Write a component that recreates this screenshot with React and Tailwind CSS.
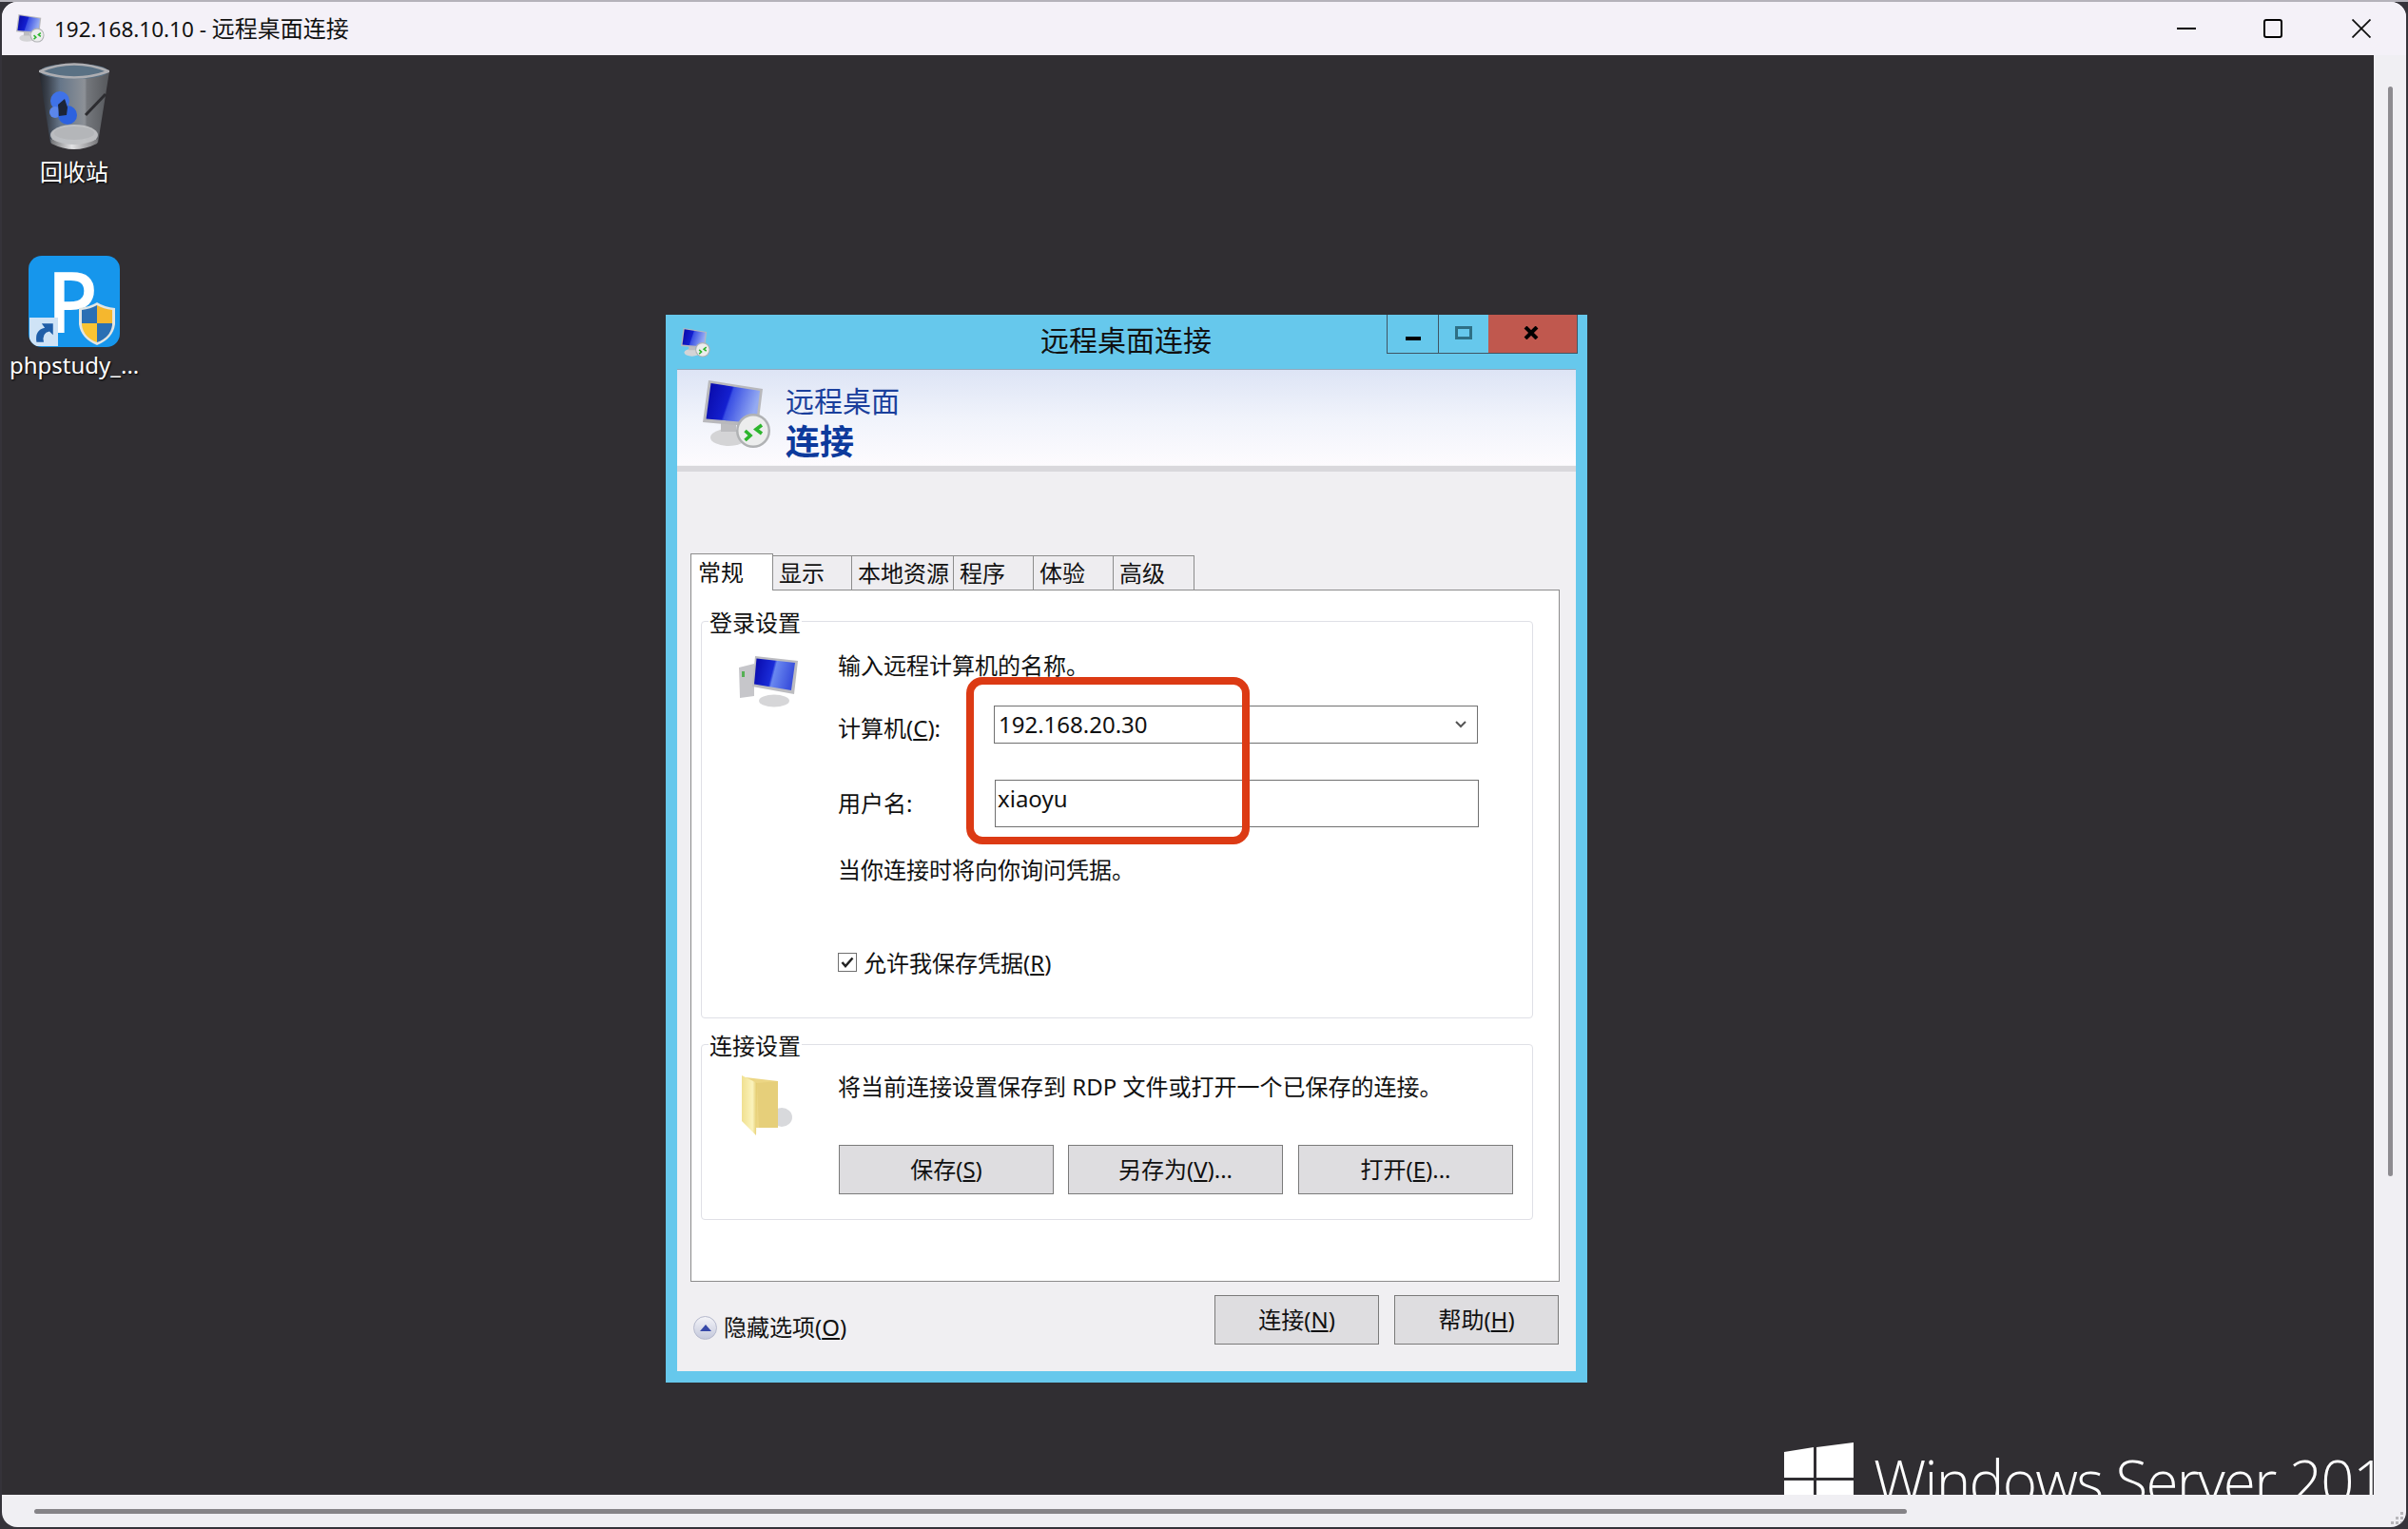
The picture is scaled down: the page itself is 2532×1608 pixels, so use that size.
import React from "react";

const font = "font-['Noto_Sans','Noto_Sans_CJK_SC',sans-serif]";

function RdpIcon({ id, className }) {
  return (
    <svg viewBox="0 0 72 72" className={className}>
      <defs>
        <linearGradient id={`${id}-screen`} x1="0" y1="0" x2="1" y2="0.25">
          <stop offset="0" stopColor="#0707a4" />
          <stop offset="0.48" stopColor="#1420d0" />
          <stop offset="0.52" stopColor="#3a50e4" />
          <stop offset="1" stopColor="#94aaf2" />
        </linearGradient>
      </defs>
      <ellipse cx="27" cy="60" rx="19" ry="9" fill="#d4d4d6" />
      <rect x="19" y="44" width="16" height="10" fill="#bdbdc0" />
      <polygon points="6,0 63,9 58,49 0,44" fill="#b8b8bc" />
      <polygon points="8.500,3 60,11 56,45 3.500,40.500" fill={`url(#${id}-screen)`} />
      <circle cx="53" cy="53" r="18" fill="#b0b2b4" />
      <circle cx="53" cy="53" r="15.500" fill="#eceded" />
      <path d="M44.500 53 L50 58 L44.500 63" fill="none" stroke="#2cb52c" strokeWidth="3.600" />
      <path d="M62 47 L56 51.500 L62 56" fill="none" stroke="#2cb52c" strokeWidth="3.600" />
    </svg>
  );
}

function RecycleBin() {
  return (
    <svg viewBox="0 0 74 94" className="w-[74px] h-[94px]">
      <defs>
        <linearGradient id="bin-body" x1="0" y1="0" x2="1" y2="0">
          <stop offset="0" stopColor="#23262c" />
          <stop offset="0.12" stopColor="#3a414c" />
          <stop offset="0.3" stopColor="#667689" />
          <stop offset="0.65" stopColor="#8d9197" />
          <stop offset="0.68" stopColor="#74777c" />
          <stop offset="1" stopColor="#55575b" />
        </linearGradient>
        <linearGradient id="bin-base" x1="0" y1="0" x2="1" y2="0">
          <stop offset="0" stopColor="#6f7073" />
          <stop offset="0.45" stopColor="#e2e2e4" />
          <stop offset="1" stopColor="#77777a" />
        </linearGradient>
      </defs>
      <path d="M0 9 L12 84 Q37 96 62 84 L74 9Z" fill="url(#bin-body)" />
      <ellipse cx="37" cy="9" rx="36" ry="8" fill="#5a7184" />
      <path d="M1 9 Q37 -6 73 9 Q37 22 1 9Z" fill="none" stroke="#aeaeb2" strokeWidth="2.500" />
      <path d="M70 33 L49 55" stroke="#2c2c30" strokeWidth="3" />
      <circle cx="22" cy="40" r="10" fill="#3f72e8" />
      <circle cx="17" cy="52" r="6" fill="#5b86ea" />
      <circle cx="30" cy="55" r="10" fill="#2c62e0" />
      <path d="M20 44 L27 38 L30 47 L29 55 L21 56Z" fill="#1c2438" />
      <ellipse cx="37" cy="76" rx="25" ry="11" fill="#c6c8ca" opacity="0.9" />
      <ellipse cx="37" cy="74" rx="21" ry="7" fill="#b4b6b9" />
      <path d="M12 80 Q37 92 62 80 L61 85 Q37 97 13 85Z" fill="url(#bin-base)" />
    </svg>
  );
}

function PhpStudyIcon() {
  return (
    <div className="relative w-[96px] h-[96px] rounded-[14px] bg-[#1696ec] overflow-hidden">
      <svg viewBox="0 0 96 96" className="absolute inset-0 w-full h-full">
        <text x="19" y="81" fontSize="88" fontWeight="600" fill="#fff" fontFamily="Open Sans, sans-serif">P</text>
        <path d="M72 49 Q64 54 53 55 L53 72 Q55 87 72 94 Q89 87 91 72 L91 55 Q80 54 72 49Z" fill="#e2e6e4" />
        <path d="M72 52 Q65 56 56 57 L56 71 L72 71Z" fill="#2a6fb4" />
        <path d="M72 52 Q79 56 88 57 L88 71 L72 71Z" fill="#f5b72e" />
        <path d="M56 71 L72 71 L72 91 Q58 86 56 73Z" fill="#f9c433" />
        <path d="M88 71 L72 71 L72 91 Q86 86 88 73Z" fill="#2a6fb4" />
      </svg>
      <div className="absolute left-[1px] bottom-[1px] w-[30px] h-[30px] bg-[#cfe3f6] flex items-center justify-center">
        <svg viewBox="0 0 24 24" className="w-[26px] h-[26px]">
          <path d="M5 22 Q3 10 13 8 L10 4 L21 4 L21 15 L17.500 11.500 Q10 13 12 22Z" fill="#1f5ea8" />
        </svg>
      </div>
    </div>
  );
}

function ComputerIcon() {
  return (
    <svg viewBox="0 0 64 56" className="w-[64px] h-[56px]">
      <defs>
        <linearGradient id="pc-screen" x1="0" y1="0" x2="1" y2="0.2">
          <stop offset="0" stopColor="#0707a8" />
          <stop offset="0.5" stopColor="#1a2cd8" />
          <stop offset="0.56" stopColor="#6a88f0" />
          <stop offset="1" stopColor="#3a50dc" />
        </linearGradient>
      </defs>
      <polygon points="0,14 16,10 16,44 1,46" fill="#c6c6ca" />
      <rect x="3" y="18" width="3" height="6" fill="#55b055" />
      <ellipse cx="37" cy="49" rx="16" ry="6.500" fill="#d6d6d8" />
      <polygon points="17,2 62,7 58,42 14,34" fill="#bcbcc0" />
      <polygon points="18.500,4.500 59,9 55,38 16,31.500" fill="url(#pc-screen)" />
    </svg>
  );
}

function FolderIcon() {
  return (
    <svg viewBox="0 0 54 64" className="w-[54px] h-[64px]">
      <defs>
        <linearGradient id="folder-flap" x1="0" y1="0" x2="1" y2="0">
          <stop offset="0" stopColor="#f0e090" />
          <stop offset="0.7" stopColor="#fbf3bc" />
          <stop offset="1" stopColor="#e2c96a" />
        </linearGradient>
      </defs>
      <ellipse cx="42" cy="44" rx="11" ry="10" fill="#d8d9dc" />
      <polygon points="4,2 38,6 38,55 14,55 4,50" fill="#ecd684" />
      <polygon points="16,8 38,6 38,55 18,55" fill="#e6cf7a" />
      <polygon points="0,0 16,8 15,63 0,48" fill="url(#folder-flap)" />
    </svg>
  );
}

function DesktopLabel({ children }) {
  return (
    <span className="text-[24px] leading-[30px] text-white whitespace-nowrap [text-shadow:1px_1px_2px_#000]">
      {children}
    </span>
  );
}

function Tab({ label, width, active }) {
  if (active) {
    return (
      <div
        className={`relative z-10 h-[39px] -mb-px ${width} bg-white border border-b-0 border-[#8c8c8c] pl-[7px] flex items-center text-[24px] leading-[30px]`}
      >
        {label}
      </div>
    );
  }
  return (
    <div
      className={`h-[36px] ${width} bg-[#eeedf0] border-t border-r border-[#8c8c8c] pl-[6px] flex items-center text-[24px] leading-[30px]`}
    >
      {label}
    </div>
  );
}

function GroupLabel({ children }) {
  return (
    <span className="absolute left-[7px] -top-[14px] bg-white px-[1px] text-[24px] leading-[30px]">{children}</span>
  );
}

function GrayButton({ children, className = "" }) {
  return (
    <button
      className={`h-[52px] bg-[#dedde0] border border-[#7a7a7a] flex items-center justify-center text-[24px] leading-[30px] text-[#111] ${className}`}
    >
      {children}
    </button>
  );
}

function RemoteDialog() {
  return (
    <div className="absolute left-[698px] top-[273px] w-[969px] h-[1123px] bg-[#66c8ec] px-[12px] pb-[12px] flex flex-col text-[#111]">
      {/* caption */}
      <div className="relative h-[57px] shrink-0 flex items-center">
        <RdpIcon id="cap" className="w-[31px] h-[31px] ml-[4px] mt-[1px]" />
        <span className="absolute left-[382px] top-[8px] text-[30px] leading-[38px]">远程桌面连接</span>
        <div className="absolute left-[746px] top-0 flex h-[41px] border border-t-0 border-[#3f5563]">
          <div className="w-[54px] border-r border-[#3f5563] flex items-center justify-center">
            <div className="w-[16px] h-[4px] bg-black mt-[9px]" />
          </div>
          <div className="w-[52px] flex items-center justify-center">
            <div className="w-[18px] h-[14px] border-[3px] border-[#2e6f85] -mt-[3px]" />
          </div>
          <div className="w-[93px] bg-[#c0584e] flex items-center justify-center">
            <svg viewBox="0 0 16 14" className="w-[16px] h-[14px] -mt-[3px] -ml-[3px]">
              <path d="M2 1 L14 13 M14 1 L2 13" stroke="#000" strokeWidth="4" />
            </svg>
          </div>
        </div>
      </div>

      {/* banner */}
      <div className="h-[101px] shrink-0 bg-gradient-to-b from-[#dde4f5] via-[#f0f3fb] to-[#fdfbfe] border-t border-[#8fa9bd] flex pl-[27px] pt-[11px]">
        <RdpIcon id="banner" className="w-[72px] h-[72px]" />
        <div className="ml-[15px] mt-[2px] flex flex-col">
          <span className="text-[30px] leading-[40px] text-[#1a3f9c]">远程桌面</span>
          <span className="text-[36px] leading-[45px] font-bold text-[#0d3a9c]">连接</span>
        </div>
      </div>
      <div className="h-[7px] shrink-0 bg-[#d9d8dc] border-t border-[#f6f6f8]" />

      {/* body */}
      <div className="flex-1 bg-[#f0eff2] px-[14px] pt-[86px] flex flex-col">
        <div className="flex items-end h-[38px]">
          <Tab label="常规" width="w-[87px]" active />
          <Tab label="显示" width="w-[83px]" />
          <Tab label="本地资源" width="w-[107px]" />
          <Tab label="程序" width="w-[84px]" />
          <Tab label="体验" width="w-[84px]" />
          <Tab label="高级" width="w-[85px]" />
        </div>

        <div className="relative h-[728px] w-[914px] bg-white border border-[#8c8c8c] pt-[32px] pl-[10px]">
          {/* login group */}
          <div className="relative w-[875px] h-[418px] border border-[#dfe0e6] rounded-[4px] pl-[143px] pt-[31px]">
            <GroupLabel>登录设置</GroupLabel>
            <div className="absolute left-[39px] top-[34px]">
              <ComputerIcon />
            </div>
            <div className="h-[30px] text-[24px] leading-[30px]">输入远程计算机的名称。</div>
            <div className="flex mt-[27px]">
              <span className="w-[164px] pt-[9px] text-[24px] leading-[30px]">
                计算机(<u className="underline-offset-2">C</u>):
              </span>
              <div className="relative w-[509px] h-[40px] border border-[#707070] pl-[4px] flex items-center text-[24px] leading-[30px]">
                192.168.20.30
                <svg viewBox="0 0 12 8" className="absolute right-[11px] top-[15px] w-[12px] h-[8px]">
                  <path d="M1 1 L6 6 L11 1" fill="none" stroke="#555" strokeWidth="2" />
                </svg>
              </div>
            </div>
            <div className="flex items-center mt-[38px]">
              <span className="w-[165px] text-[24px] leading-[30px]">用户名:</span>
              <div className="w-[509px] h-[50px] border border-[#707070] pl-[2px] pt-[4px] text-[24px] leading-[30px]">xiaoyu</div>
            </div>
            <div className="mt-[30px] text-[24px] leading-[30px]">当你连接时将向你询问凭据。</div>
            <div className="mt-[68px] flex items-center">
              <span className="w-[20px] h-[20px] -mt-[2px] border border-[#707070] bg-white flex items-center justify-center">
                <svg viewBox="0 0 14 12" className="w-[14px] h-[12px]">
                  <path d="M1.500 6 L5 10 L12.500 1.500" fill="none" stroke="#222" strokeWidth="2.500" />
                </svg>
              </span>
              <span className="ml-[7px] text-[24px] leading-[30px]">
                允许我保存凭据(<u className="underline-offset-2">R</u>)
              </span>
            </div>
          </div>

          {/* connection group */}
          <div className="relative w-[875px] h-[185px] mt-[27px] border border-[#dfe0e6] rounded-[4px] pl-[143px] pt-[29px]">
            <GroupLabel>连接设置</GroupLabel>
            <div className="absolute left-[42px] top-[32px]">
              <FolderIcon />
            </div>
            <div className="h-[30px] text-[24px] leading-[30px]">将当前连接设置保存到 RDP 文件或打开一个已保存的连接。</div>
            <div className="flex gap-[15px] mt-[46px] ml-[1px]">
              <GrayButton className="w-[226px]">保存(<u className="underline-offset-2">S</u>)</GrayButton>
              <GrayButton className="w-[226px]">另存为(<u className="underline-offset-2">V</u>)...</GrayButton>
              <GrayButton className="w-[226px] ml-[1px]">打开(<u className="underline-offset-2">E</u>)...</GrayButton>
            </div>
          </div>
        </div>

        {/* footer */}
        <div className="flex justify-between pt-[14px] pr-[4px]">
          <div className="flex items-center pl-[3px] pt-[8px] h-[60px]">
            <span className="w-[25px] h-[25px] rounded-full bg-gradient-to-b from-[#f4f4f8] to-[#c4c8dc] border border-[#b4b8cc] flex items-center justify-center">
              <span className="w-0 h-0 border-x-[6px] border-x-transparent border-b-[7px] border-b-[#3648a8]" />
            </span>
            <span className="ml-[7px] text-[24px] leading-[30px]">隐藏选项(<u className="underline-offset-2">O</u>)</span>
          </div>
          <div className="flex gap-[16px]">
            <GrayButton className="w-[173px] border-[#3d7aa8]">连接(<u className="underline-offset-2">N</u>)</GrayButton>
            <GrayButton className="w-[173px]">帮助(<u className="underline-offset-2">H</u>)</GrayButton>
          </div>
        </div>
      </div>

      {/* red annotation */}
      <div className="absolute left-[316px] top-[381px] w-[298px] h-[176px] border-[8px] border-[#dc3a14] rounded-[17px] pointer-events-none" />
    </div>
  );
}

export default function App() {
  return (
    <div className={`w-[2532px] h-[1608px] overflow-hidden bg-[#35333a] flex flex-col ${font}`}>
      <div className="h-[2px] shrink-0 bg-[#b4b2ba]" />
      <div className="flex-1 ml-[2px] mr-[2px] rounded-[16px] overflow-hidden bg-[#f0eff3] flex flex-col">
        {/* title bar */}
        <div className="h-[56px] shrink-0 bg-[#f4f1f8] flex items-center pl-[15px] relative">
          <RdpIcon id="title" className="w-[30px] h-[30px]" />
          <span className="ml-[10px] text-[24px] leading-[30px] text-[#111] whitespace-nowrap">
            <span className="text-[22.5px]">192.168.10.10 - </span>远程桌面连接
          </span>
          <div className="ml-auto flex items-center pr-[37px]">
            <div className="w-[20px] h-[2px] bg-black mr-[71px]" />
            <div className="w-[20px] h-[20px] border-2 border-black rounded-[3px] mr-[73px]" />
            <svg viewBox="0 0 20 20" className="w-[20px] h-[20px]">
              <path d="M0.500 0.500 L19.500 19.500 M19.500 0.500 L0.500 19.500" stroke="#111" strokeWidth="1.800" />
            </svg>
          </div>
        </div>

        <div className="flex-1 flex min-h-0">
          {/* remote desktop */}
          <div className="relative flex-1 bg-[#302e32] overflow-hidden">
            <div className="absolute left-[39px] top-[8px]">
              <RecycleBin />
            </div>
            <div className="absolute left-[40px] top-[108px]">
              <DesktopLabel>回收站</DesktopLabel>
            </div>
            <div className="absolute left-[28px] top-[211px]">
              <PhpStudyIcon />
            </div>
            <div className="absolute left-[8px] top-[311px]">
              <DesktopLabel>phpstudy_...</DesktopLabel>
            </div>

            <RemoteDialog />

            {/* watermark */}
            <svg viewBox="0 0 73 60" className="absolute left-[1874px] top-[1459px] w-[73px] h-[60px]">
              <polygon points="0,10 31,5 31,37 0,37" fill="#fff" />
              <polygon points="34,5 73,0 73,37 34,37" fill="#fff" />
              <rect x="0" y="40" width="31" height="20" fill="#fff" />
              <rect x="34" y="40" width="39" height="20" fill="#fff" />
            </svg>
            <span className="absolute left-[1968px] top-[1459px] text-[62px] leading-[80px] font-light tracking-[-1.8px] text-white whitespace-nowrap font-['Open_Sans',sans-serif]">
              Windows Server 201
            </span>
          </div>
          {/* vertical scrollbar */}
          <div className="w-[34px] shrink-0 pt-[33px] pl-[15px]">
            <div className="w-[5px] h-[1146px] rounded-full bg-[#8d8b90]" />
          </div>
        </div>

        {/* horizontal scrollbar */}
        <div className="relative h-[34px] shrink-0 pt-[15px] pl-[34px]">
          <div className="w-[1969px] h-[5px] rounded-full bg-[#858387]" />
          <div className="absolute right-[3px] bottom-[3px] grid grid-cols-3 gap-[2px]">
            <span />
            <span />
            <span className="w-[3px] h-[3px] bg-[#b8b7bb]" />
            <span />
            <span className="w-[3px] h-[3px] bg-[#b8b7bb]" />
            <span className="w-[3px] h-[3px] bg-[#b8b7bb]" />
            <span className="w-[3px] h-[3px] bg-[#b8b7bb]" />
            <span className="w-[3px] h-[3px] bg-[#b8b7bb]" />
            <span className="w-[3px] h-[3px] bg-[#b8b7bb]" />
          </div>
        </div>
      </div>
      <div className="h-[2px] shrink-0" />
    </div>
  );
}
